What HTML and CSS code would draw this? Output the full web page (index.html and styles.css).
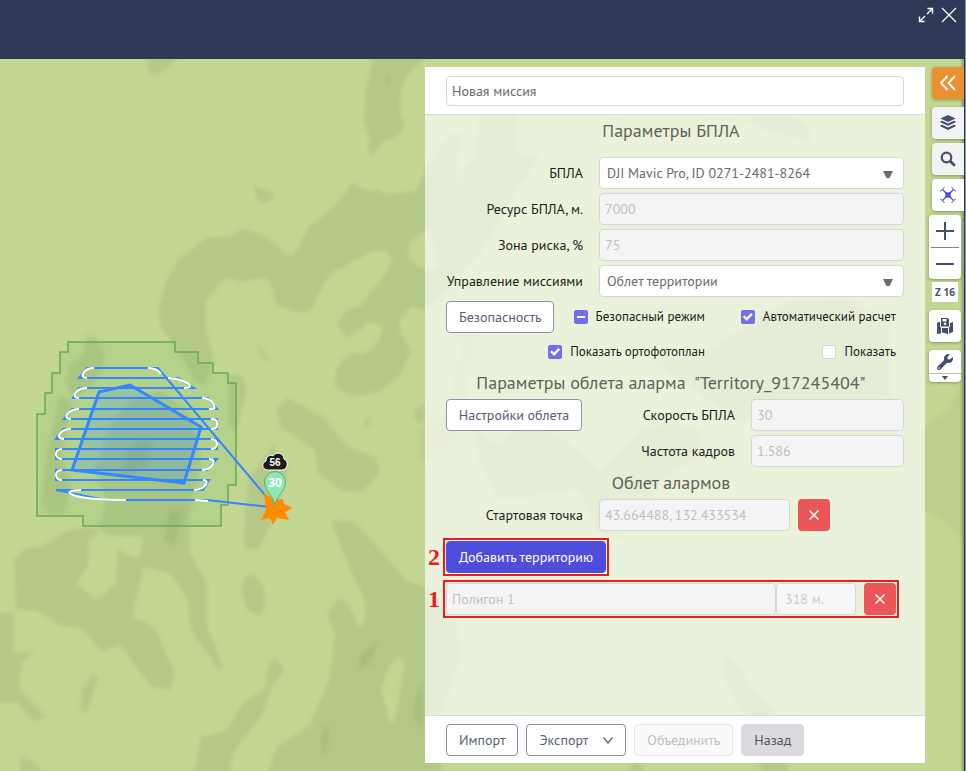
FILE: index.html
```html
<!DOCTYPE html>
<html lang="ru">
<head>
<meta charset="utf-8">
<title>Новая миссия</title>
<link rel="stylesheet" href="styles.css">
</head>
<body>
<header class="topbar">
  <button class="topbar-btn" type="button" aria-label="Развернуть">
    <svg width="16" height="16" viewBox="0 0 16 16" fill="none" stroke="#fff" stroke-width="1.4"><path d="M9.5 1.5h5v5M14.500 1.500L9 7M6.500 14.500h-5v-5M1.500 14.500L7 9"/></svg>
  </button>
  <button class="topbar-btn" type="button" aria-label="Закрыть">
    <svg width="16" height="16" viewBox="0 0 16 16" fill="none" stroke="#fff" stroke-width="1.2"><path d="M1 1l14 14M15 1L1 15"/></svg>
  </button>
</header>
<main class="workspace">
  <svg class="map" aria-hidden="true">
    <defs>
      <filter id="soft" x="-5%" y="-5%" width="110%" height="110%"><feGaussianBlur stdDeviation="2"/></filter>
    </defs>
    <g transform="translate(0 -59)">
      <g class="relief" filter="url(#soft)">
        <path d="M148 50h32l-10 16-14 9q-8-1-8-8z"/>
        <path d="M375 50h55l-10 13-14 12-5 18-1 20 4 8-2 10-8 7-10 4-8 7-3 7-4-3v-14l-5-18 2-30z"/>
        <path d="M253 185l20 7v6q-9 9-16 0z"/>
        <path d="M171 340l-10-13-3-17 10-33 13-20 26-19 23-2 15-7 22 8 16 14 7 5 6-4 13-25 26-21 17-23 16 8 10-1 9 5 30-4 10-25 25-35 10 4-8 50 20-28 8-55h36l-2 50 25 5-28 40-28 50-54 61-10 2-10-4-12 15 3 15 9 14-11 26-22 16-27 5-16-11 1-17 12-15h17l13-12 6-14-13-7-23 17-11-13 8-14 16-6 20-25 11-18-3-11h-17l-40 22-10 14-10 22-8 4-27-7-6-22-7-7-22 5-16-5-20 23v30l7 25-2 17-8 14-8-6z"/>
        <path d="M87 334l9 3 9 18-5 20-12 14-14 10-8-16 4-20 12-6z"/>
        <path d="M110 425l20-25 30-10 28 20 14 50-8 32-10 44H98l8-36-12-30z"/>
        <path d="M60 395l12 8-10 50 8 30-4 28q-14 8-24-4l4-50z"/>
        <path d="M228 375q20-4 18 18l-10 40-8-10z"/>
        <path d="M16 610l-2-50 13-12 16-2 24-15 26-4 17 13 12 13 18 5 5-31 12-20 30-8 3 54 17 30v44l16 39-4 5-28-41-4-33-17-24-26-6-12 50 22 10 20 43-2 19-20-2-33-43-17 8-20-24-23-3-21-15z"/>
        <path d="M-5 613h18v40l22-2-14 12-2 27 27 27-12 5-17-20H-5z"/>
        <path d="M331 521l24 1 28 31 22 27 24 9 28 30 4 40-20 58v60H267l10-30 33-22 20-48 5-40-7-24 10-15 10 5 10 24 8-6-1-20-15-33z"/>
        <path d="M275 657l9 13-14 20-7 23-30 40-4 25h-36l8-40 26-8 16-27 24-16v-20z"/>
        <path d="M288 398l35 19 25 30 28 11 3 15-16 19-23-2-22-18-4-23-33-22-4-17z"/>
        <path d="M252 573l12 14 1 20-6 9-11-6-6-17 2-14zM248 480l22-30 4-7 2 12 12 15-18 55-12 24q-12 4-14-8zM94 672l4 6-12 36-6-5 2-20zM21 757l15 6 8 14H20zM258 344l12 15-3 2q-11-7-9-17zM374 412l-8 20-2-8zM415 410l10-7v20l-10-3z"/>
        <path d="M475 430l25 15 20-20 35 7 45 38 42-42 30-6 30 8-4 28-35 20-42 60-22-5-20-43-80 10-20-35zM725 650l25 32 28 30 12 70h-24l-30-80-15-30zM628 772l10-15 6 18zM650 360l50-5 80-50 60-10 50 25v80l-80 25-70-3zM790 115l22 15-2 12-40-10-32-15z"/>
        <path d="M920 430l30-22 20-45v190l-22-30-28-14zM420 430l25-20 20-78 10-12-8 78-12 45-35 20z" opacity=".55"/>
      </g>
      <g class="clearing" filter="url(#soft)">
        <path d="M430 228l-21 14v14l10 12h18zM100 531l19 10-3 43-19 15-22-15 13-18 1-25zM400 655l5 9-11 60-4-2-9-32 7-22z"/>
      </g>
      <g class="relief-deep" filter="url(#soft)">
        <path d="M386 75h3v10h-3zM378 640l-8 24-13 7 3-16zM423 680v50l-9-12 1-18zM330 725l-4 28-4 2v-24zM130 445l14-8 10 8-8 22-28 12zM170 510l12 2-8 36-10-10z"/>
      </g>
      <path class="zone" d="M68 342H175V352H198V363H213V373H228V383H236V485H228V505H221V526H83V516H37V414H45V393H52V373H60V352H68Z"/>
      <path class="route" d="M275 507L158 368H87L79 378H178L194 388H79L73 398H208L217 409H72L64 419H217V429H63L56 439H217V449H56V459H217L207 470H56V480H209L203 490H56L105 500H207L270 507"/>
      <path class="route-turn" d="M94 368C84 368 78 378 87 378M148 368Q157 368 161 374M168 378C180 378 190 384 190 386Q190 388 184 388M87 388C76 388 70 398 79 398M202 398C213 398 217 409 213 409H209M79 409C69 409 61 419 71 419M211 419Q217 419 217 422V426Q217 429 211 429M71 429C60 429 54 439 64 439M211 439C219 439 219 449 211 449M62 449C54 449 54 459 62 459M209 459C219 459 211 470 202 470M62 470C54 470 54 480 62 480M203 480C211 480 205 490 194 490M81 490C58 490 68 500 126 500M195 500L208 501"/>
      <path class="plot" d="M99 392L130 385L201 427L184 483L72 470Z"/>
      <path fill="#ff8c00" d="M264 493l11 7 8-1 1 5 9 4-8 4 4 8-12-2-4 7-3-7-9 2 5-10z"/>
      <path fill="#8ee8b5" stroke="#5fae82" d="M275 506C274 496 264.500 491 264.500 482A10.500 10.500 0 0 1 285.500 482C285.500 491 276 496 275 506Z"/>
      <text class="pin-text" x="275" y="487">30</text>
      <path fill="#1c1c18" stroke="#fff" d="M268 470C262 470 261 463 266 461C266 456 271 454 273 456C276 451 284 453 284 459C289 461 288 470 282 470Z"/>
      <text class="cloud-text" x="275" y="466">56</text>
    </g>
  </svg>

  <form class="panel">
    <div class="panel-head">
      <input class="field field-name" type="text" value="Новая миссия" aria-label="Название миссии">
    </div>
    <div class="panel-body">
      <h2 class="title title-first">Параметры БПЛА</h2>
      <div class="form-grid">
        <label for="uav">БПЛА</label>
        <div class="select-wrap">
          <select class="field" id="uav"><option>DJI Mavic Pro, ID 0271-2481-8264</option></select>
          <svg class="caret" width="10" height="8" viewBox="0 0 10 8"><path d="M0 0h10L6.500 7h-3z"/></svg>
        </div>
        <label for="resource">Ресурс БПЛА, м.</label>
        <input class="field" id="resource" type="text" value="7000" disabled>
        <label for="risk">Зона риска, %</label>
        <input class="field" id="risk" type="text" value="75" disabled>
        <label for="mode">Управление миссиями</label>
        <div class="select-wrap">
          <select class="field" id="mode"><option>Облет территории</option></select>
          <svg class="caret" width="10" height="8" viewBox="0 0 10 8"><path d="M0 0h10L6.500 7h-3z"/></svg>
        </div>
      </div>
      <div class="checks">
        <div class="check-cell">
          <button class="btn btn-safety" type="button">Безопасность</button>
          <label class="check"><input class="mixed" type="checkbox">Безопасный режим</label>
        </div>
        <div class="check-cell"><label class="check"><input type="checkbox" checked>Автоматический расчет</label></div>
        <div class="check-cell"><label class="check"><input type="checkbox" checked>Показать ортофотоплан</label></div>
        <div class="check-cell"><label class="check"><input type="checkbox">Показать</label></div>
      </div>
      <h2 class="title">Параметры облета аларма &nbsp;"Territory_917245404"</h2>
      <div class="flight-grid">
        <button class="btn" type="button">Настройки облета</button>
        <label for="speed">Скорость БПЛА</label>
        <input class="field" id="speed" type="text" value="30" disabled>
        <label class="rate-label" for="rate">Частота кадров</label>
        <input class="field" id="rate" type="text" value="1.586" disabled>
      </div>
      <h2 class="title">Облет алармов</h2>
      <div class="start-row">
        <label for="start">Стартовая точка</label>
        <input class="field" id="start" type="text" value="43.664488, 132.433534" disabled>
        <button class="btn-remove" type="button" aria-label="Удалить точку"><svg width="10" height="10" viewBox="0 0 10 10"><path d="M.5.500l9 9M9.500.500l-9 9"/></svg></button>
      </div>
      <div class="add-row marked"><span class="mark">2</span><button class="btn btn-primary" type="button">Добавить территорию</button></div>
      <div class="plot-row marked">
        <span class="mark">1</span>
        <input class="field" type="text" value="Полигон 1" aria-label="Название полигона" disabled>
        <input class="field field-length" type="text" value="318 м." aria-label="Длина" disabled>
        <button class="btn-remove" type="button" aria-label="Удалить полигон"><svg width="10" height="10" viewBox="0 0 10 10"><path d="M.5.500l9 9M9.500.500l-9 9"/></svg></button>
      </div>
    </div>
    <div class="panel-foot">
      <button class="btn" type="button">Импорт</button>
      <button class="btn btn-export" type="button">Экспорт <svg width="10" height="7" viewBox="0 0 10 7" fill="none" stroke="currentColor" stroke-width="1.2"><path d="M.5.500L5 6 9.500.500"/></svg></button>
      <button class="btn btn-merge" type="button" disabled>Объединить</button>
      <button class="btn btn-back" type="button">Назад</button>
    </div>
  </form>

  <nav class="tools" aria-label="Инструменты карты">
    <button class="tool tool-edge tool-collapse" type="button" aria-label="Свернуть">
      <svg width="16" height="16" viewBox="0 0 16 16" fill="none" stroke="#fff" stroke-width="1.900"><path d="M7.500 1L1 8l6.500 7M15 1L8.500 8l6.500 7"/></svg>
    </button>
    <button class="tool tool-edge" type="button" aria-label="Слои">
      <svg width="16" height="16" viewBox="0 0 16 16" fill="#46506e"><path d="M8 0l7.700 3.500L8 7.100.3 3.500zM2.200 5.700L8 8.400l5.800-2.700 1.900.9v.6L8 10.800.3 7.200v-.6zM2.200 9.700L8 12.400l5.800-2.700 1.900.9v.6L8 14.900.3 11.200v-.6z"/></svg>
    </button>
    <button class="tool tool-edge" type="button" aria-label="Поиск">
      <svg width="16" height="16" viewBox="0 0 16 16" fill="none" stroke="#46506e"><circle cx="6.500" cy="6.500" r="4.800" stroke-width="2.200"/><path stroke-width="2.800" d="M10.300 10.300l4.500 4.500"/></svg>
    </button>
    <button class="tool tool-edge tool-active" type="button" aria-label="Дрон">
      <svg width="16" height="16" viewBox="0 0 16 16" fill="none" stroke="#4f4fd8"><path fill="#4f4fd8" stroke="none" d="M4.500 4.500l3.500 1 3.500-1-1 3.500 1 3.500-3.500-1-3.500 1 1-3.500z"/><path stroke-width="1.300" d="M2.500 2.500l11 11M13.500 2.500l-11 11"/><path d="M.5 4.500Q.8 3 2.500 2.500 3 .8 4.500.5M11.500.5Q13 .8 13.500 2.500 15.200 3 15.500 4.500M15.500 11.500Q15.200 13 13.500 13.500 13 15.200 11.500 15.500M4.500 15.500Q3 15.200 2.500 13.500.8 13 .5 11.500"/></svg>
    </button>
    <div class="zoom">
      <button type="button" aria-label="Приблизить"><svg width="20" height="20" viewBox="0 0 20 20"><path d="M10 1v18M1 10h18"/></svg></button>
      <button type="button" aria-label="Отдалить"><svg width="20" height="20" viewBox="0 0 20 20"><path d="M1 10h18"/></svg></button>
    </div>
    <output class="zoom-level">Z 16</output>
    <button class="tool tool-save" type="button" aria-label="Сохранить карту">
      <svg width="18" height="18" viewBox="0 0 18 18" fill="#46506e"><path d="M1 6l3-1.500v5.500h1v6.500L1 17zM17 5l-3 1v4h-1v6.500l4-1.500zM6 11h6v6l-6-1.500z"/><path fill-rule="evenodd" d="M5 1h6.500L13 2.500V9.500H5zM6.500 2v2.500h4V2zM9 5.500a1.300 1.300 0 1 0 .1 0z"/></svg>
    </button>
    <button class="tool tool-service" type="button" aria-label="Сервис">
      <span class="wrench"><svg width="16" height="16" viewBox="0 0 512 512" fill="#46506e"><path d="M508 109c-2-9-14-12-21-5l-74 74-68-11-11-68 74-74c7-7 4-18-5-21-48-12-101 1-138 38-40 40-51 97-35 147L19 401c-25 25-25 66 0 91s66 25 91 0l211-211c50 16 108 5 148-35 37-37 50-90 39-137zM64 472a24 24 0 1 1 0-48 24 24 0 0 1 0 48z"/></svg></span>
      <svg width="6" height="4" viewBox="0 0 6 4" fill="#46506e"><path d="M0 0h6L3 4z"/></svg>
    </button>
  </nav>
</main>
</body>
</html>
```
FILE: styles.css
```css
* {
  box-sizing: border-box;
}

body {
  display: flex;
  flex-direction: column;
  min-height: 100vh;
  margin: 0;
  border-right: 1px solid #8f93b2;
  font-family: "PT Sans", "Noto Sans", sans-serif;
  font-size: 14px;
  line-height: 20px;
  color: #1c1c1c;
}

button,
input,
select {
  font: inherit;
}

button {
  padding: 0;
  border: 0;
  background: none;
}

svg {
  display: block;
}

.topbar {
  display: flex;
  justify-content: flex-end;
  align-items: flex-start;
  gap: 7px;
  height: 59px;
  padding: 7px 8px;
  background: #2f3856;
}

/* Map */
.workspace {
  position: relative;
  display: flex;
  flex: 1;
  justify-content: flex-end;
  gap: 4px;
  padding: 8px 0;
  border-right: 1px solid #2f3856;
  background: #c3d692;
}

.map {
  position: absolute;
  inset: 0;
  width: 100%;
  height: 100%;
}

.relief {
  fill: #b4c887;
}

.relief-deep {
  fill: #a9be7c;
}

.clearing {
  fill: #c3d692;
}

.zone {
  fill: rgba(80, 180, 90, .12);
  stroke: #67ab57;
  stroke-width: 1.5;
}

.route {
  fill: none;
  stroke: #3388ff;
  stroke-width: 2;
}

.route-turn {
  fill: none;
  stroke: #fff;
  stroke-width: 2;
}

.plot {
  fill: rgba(51, 136, 255, .2);
  stroke: #3388ff;
  stroke-width: 3;
}

.pin-text,
.cloud-text {
  fill: #fff;
  font-family: "Open Sans", sans-serif;
  font-weight: 700;
  text-anchor: middle;
}

.pin-text {
  font-size: 12px;
}

.cloud-text {
  font-family: "Liberation Sans", sans-serif;
  font-size: 10px;
}

/* Mission panel */
.panel {
  position: relative;
  display: flex;
  flex-direction: column;
  width: 500px;
  margin: 0;
}

.panel-head {
  padding: 9px 21px 8px;
  border-bottom: 1px solid #d8d9dc;
  background: #fff;
}

.panel-body {
  flex: 1;
  padding: 0 21px;
  background: rgba(255, 255, 255, .67);
}

.panel-foot {
  display: flex;
  gap: 8px;
  padding: 8px 21px 7px;
  border-top: 1px solid #d8d9dc;
  background: #fff;
}

.title {
  margin: 0;
  padding-right: 8px;
  font-size: 18px;
  font-weight: 400;
  line-height: 32px;
  text-align: center;
  color: #5f6259;
}

.title-first {
  margin-bottom: 10px;
}

.field {
  width: 100%;
  min-width: 0;
  height: 32px;
  padding: 0 5px;
  border: 1px solid #d5d6da;
  border-radius: 4px;
  background: #fff;
  color: #6b6b6b;
}

.field:disabled {
  background: #f4f4f4;
  color: #c0c0c0;
}

.field-name {
  display: block;
  height: 30px;
}

.select-wrap {
  position: relative;
}

select.field {
  display: block;
  padding: 0 24px 0 7px;
  appearance: none;
}

.caret {
  position: absolute;
  top: 14px;
  right: 11px;
  fill: #6b6b6b;
  pointer-events: none;
}

.form-grid,
.flight-grid,
.start-row {
  display: grid;
  align-items: center;
  text-align: right;
}

.form-grid {
  grid-template-columns: 137px 1fr;
  gap: 4px 16px;
}

.form-grid label,
.start-row label {
  white-space: nowrap;
}

.checks {
  display: grid;
  grid-template-columns: 259px 1fr;
  grid-template-rows: 32px 30px;
  gap: 4px 0;
  padding: 4px 8px 0 0;
}

.check-cell {
  display: flex;
  justify-content: flex-end;
  align-items: center;
}

.btn-safety {
  margin-right: auto;
}

.check {
  display: flex;
  align-items: center;
  gap: 8px;
  font-size: 13px;
  white-space: nowrap;
}

.check input {
  display: grid;
  place-items: center;
  width: 14px;
  height: 14px;
  margin: 0;
  border: 1px solid #d5d6da;
  border-radius: 2px;
  background: #fff;
  appearance: none;
}

.check input:checked,
.check .mixed {
  border-color: #7070ee;
  background: #7070ee;
}

.check input:checked::before {
  width: 10px;
  height: 8px;
  background: #fff;
  clip-path: polygon(0 50%, 16% 30%, 38% 56%, 84% 0, 100% 18%, 40% 100%);
  content: "";
}

.check .mixed::before {
  width: 8px;
  height: 2px;
  background: #fff;
  content: "";
}

.flight-grid {
  grid-template-columns: 136px 1fr 153px;
  gap: 4px 16px;
}

.rate-label {
  grid-column: 2;
}

.start-row {
  grid-template-columns: 137px 191px 32px;
  column-gap: 8px;
}

.start-row .field {
  margin-left: 8px;
}

.start-row .btn-remove {
  margin-left: 8px;
}

.btn {
  height: 32px;
  padding: 0 12px;
  border: 1px solid #8f93a8;
  border-radius: 4px;
  background: #fff;
  color: #565e7a;
  white-space: nowrap;
}

.flight-grid .btn {
  padding: 0;
}

.btn-primary {
  border-color: #4e4edb;
  background: #4e4edb;
  color: #fff;
}

.btn-export {
  display: flex;
  align-items: center;
  gap: 15px;
}

.btn-merge {
  border-color: #e6e6e8;
  background: #fafafa;
  color: #bfbfc2;
}

.btn-back {
  border-color: #dadae0;
  background: #dadae0;
  color: #55565c;
}

.btn-remove {
  display: grid;
  place-items: center;
  flex: none;
  width: 32px;
  height: 32px;
  border-radius: 4px;
  background: #eb5757;
}

.btn-remove path {
  fill: none;
  stroke: #fff;
  stroke-width: 1.5;
}

/* Numbered callouts around rows */
.marked {
  position: relative;
  display: flex;
  outline: 2px solid #ed1c24;
  outline-offset: 1px;
}

.mark {
  position: absolute;
  top: 4px;
  right: 100%;
  margin-right: 6px;
  color: #ed1c24;
  font-family: "Liberation Serif", serif;
  font-size: 24px;
  font-weight: 700;
  line-height: 24px;
}

.add-row {
  width: fit-content;
  margin-top: 10px;
}

.plot-row {
  margin: 10px 8px 0 0;
}

.plot-row .field-length {
  flex: 0 0 80px;
  margin-right: 8px;
  padding-left: 8px;
  background: #f7f7f7;
  color: #ccc;
}

/* Map tools */
.tools {
  position: relative;
  display: flex;
  flex-direction: column;
  align-items: flex-end;
  width: 35px;
  margin: -8px 0;
  padding-top: 8px;
  background: linear-gradient(to left, rgba(60, 80, 40, .45), transparent 4px);
}

.tool {
  display: grid;
  place-items: center;
  width: 32px;
  height: 32px;
  margin-bottom: 4px;
  border-radius: 4px;
  background: #fff;
  box-shadow: 0 1px 3px rgba(50, 70, 30, .4);
}

.tool-edge {
  border-radius: 4px 0 0 4px;
  background: #f3f3f3;
}

.tool-collapse {
  margin-bottom: 8px;
  background: #e9922f;
}

.tool-active {
  background: #fff;
}

.zoom {
  width: 32px;
  margin: 0 3px 3px 0;
  border-radius: 4px;
  background: #fff;
  box-shadow: 0 1px 3px rgba(50, 70, 30, .4);
}

.zoom button {
  display: grid;
  place-items: center;
  width: 28px;
  height: 32px;
  margin: 0 auto;
}

.zoom button + button {
  border-top: 1px solid #7d8396;
}

.zoom path {
  stroke: #46506e;
  stroke-width: 2;
}

.zoom-level {
  width: 26px;
  margin: 0 6px 8px 0;
  background: #fff;
  color: #46506e;
  font-family: "Open Sans", sans-serif;
  font-size: 10px;
  font-weight: 700;
  text-align: center;
}

.tool-save {
  margin: 0 3px 8px 0;
}

.tool-service {
  grid-template-rows: 24px 8px;
  margin-right: 3px;
}

.wrench {
  display: grid;
  place-items: center;
  width: 100%;
  height: 24px;
  border-bottom: 1px solid #b9bcc6;
}
```
